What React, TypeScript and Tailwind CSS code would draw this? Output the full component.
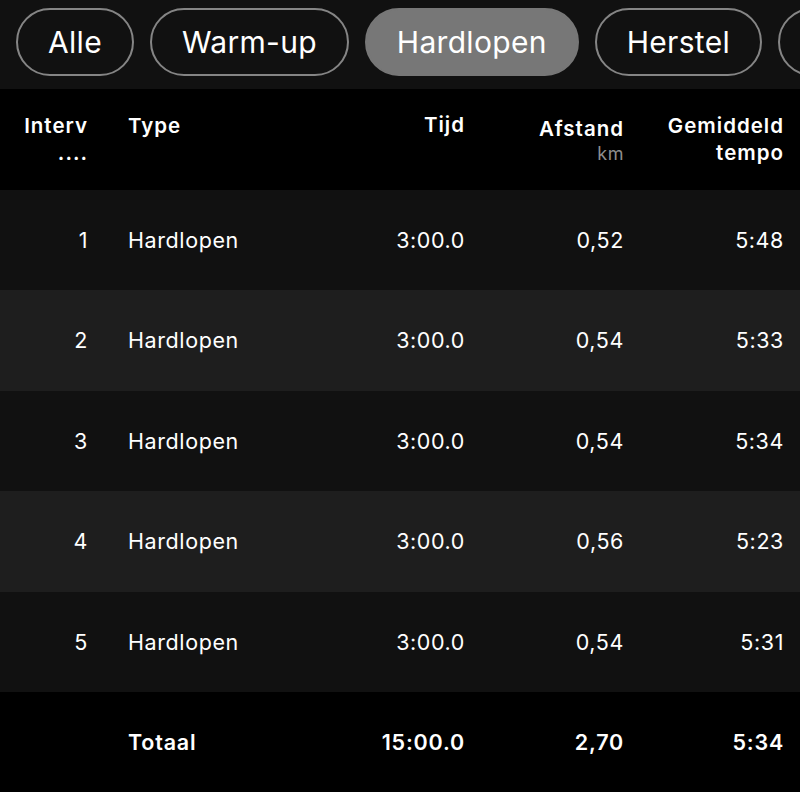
const filters = ['Alle', 'Warm-up', 'Hardlopen', 'Herstel', 'Afkoelen'];

const rows = [
  { n: 1, time: '3:00.0', dist: '0,52', pace: '5:48' },
  { n: 2, time: '3:00.0', dist: '0,54', pace: '5:33' },
  { n: 3, time: '3:00.0', dist: '0,54', pace: '5:34' },
  { n: 4, time: '3:00.0', dist: '0,56', pace: '5:23' },
  { n: 5, time: '3:00.0', dist: '0,54', pace: '5:31' },
];

const cols = 'grid grid-cols-[88px_247px_130px_159px_160px] pr-[15px]';

export default function App() {
  return (
    <div className="w-[800px] h-[792px] overflow-hidden bg-black text-white font-['Inter',sans-serif]">
      <div className="h-[89px] bg-[#111111] flex items-start pt-2 gap-4 pl-4 overflow-hidden">
        {filters.map((f) => (
          <div
            key={f}
            className={`shrink-0 h-[68px] px-[30px] rounded-full flex items-center text-[30px] tracking-[0.3px] ${
              f === 'Hardlopen' ? 'bg-[#777777] border-2 border-[#777777]' : 'border-2 border-[#858585]'
            }`}
          >
            {f}
          </div>
        ))}
      </div>

      <div className={`${cols} h-[101px] pt-[23px] font-semibold text-[20.5px] tracking-[1px] leading-[27px]`}>
        <div className="text-right">
          <div>Interv</div>
          <div>....</div>
        </div>
        <div className="pl-10">Type</div>
        <div className="text-right -mt-[1px]">Tijd</div>
        <div className="text-right">
          <div className="pt-[3px]">Afstand</div>
          <div className="font-normal text-[#8e8e8e] text-[18px] leading-[24px] tracking-[0.5px]">km</div>
        </div>
        <div className="text-right">
          <div>Gemiddeld</div>
          <div>tempo</div>
        </div>
      </div>

      {rows.map((r, i) => (
        <div
          key={r.n}
          className={`${cols} h-[100.4px] items-center text-[21.5px] tracking-[0.6px] ${i % 2 === 0 ? 'bg-[#111111]' : 'bg-[#1e1e1e]'}`}
        >
          <div className="text-right">{r.n}</div>
          <div className="pl-10">Hardlopen</div>
          <div className="text-right">{r.time}</div>
          <div className="text-right">{r.dist}</div>
          <div className="text-right">{r.pace}</div>
        </div>
      ))}

      <div className={`${cols} h-[100px] items-center text-[21.5px] tracking-[0.8px] font-semibold`}>
        <div />
        <div className="pl-10">Totaal</div>
        <div className="text-right">15:00.0</div>
        <div className="text-right">2,70</div>
        <div className="text-right">5:34</div>
      </div>
    </div>
  );
}
